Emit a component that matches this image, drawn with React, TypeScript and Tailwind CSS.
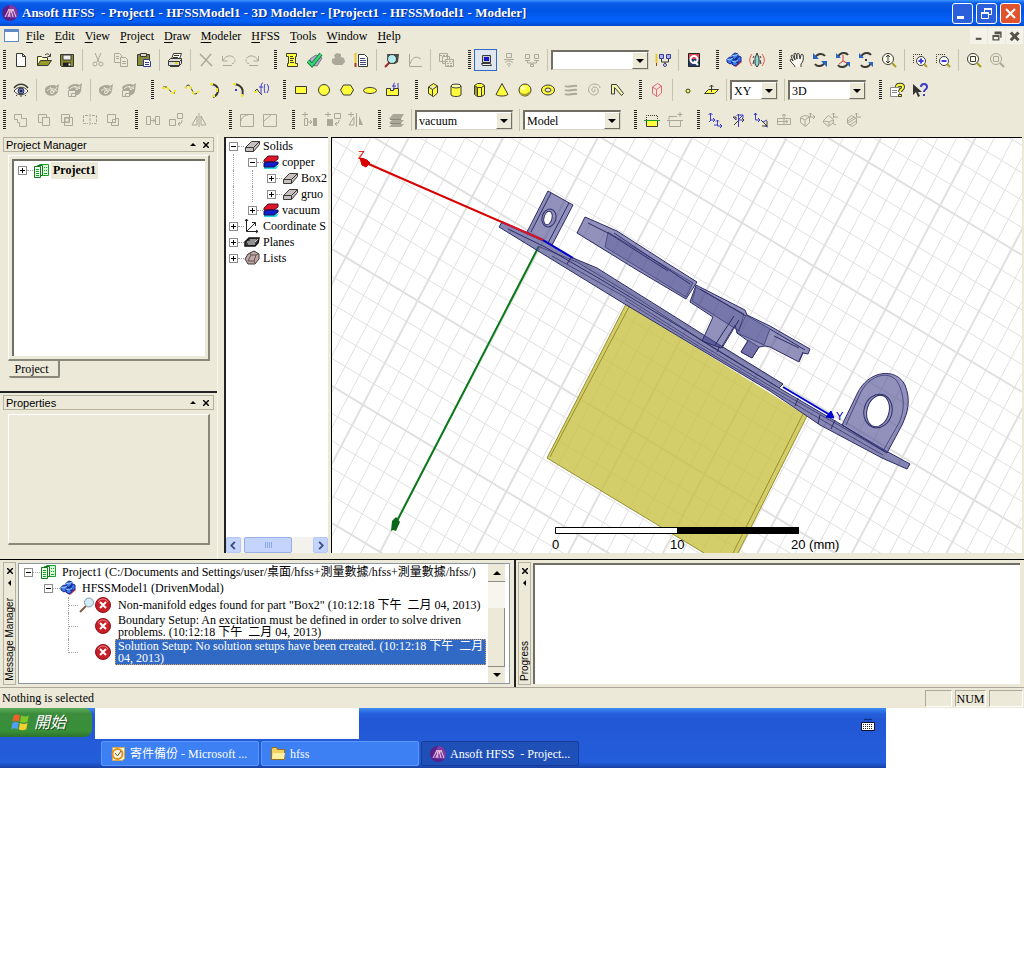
import React from "react";
import clsx from "clsx";

/* ---------- icon drawings, all on a 16 x 16 grid ---------- */

const K = "#3a3a34";
const Y = "#ffff3c";
const B = "#3c3cc8";

const icons: Record<string, React.ReactNode> = {
    new: <path d="M3.5 1.5h6l3 3v10h-9zM9.5 1.5v3h3" fill="#fff" stroke={K} />,
    open: (
        <>
            <path d="M1.5 13.5v-9h4l1 1h5v3" fill="#ffffc0" stroke={K} />
            <path d="M1.5 13.5l3-5h11l-3.500 5z" fill="#9a9a28" stroke={K} />
            <path d="M9 3c2-2 4-1 5 1M14.500 1.500v3h-3" stroke={K} />
        </>
    ),
    save: (
        <>
            <path d="M1.500 2.500h13v12h-12l-1-1z" fill="#8a8a2c" stroke={K} />
            <path d="M4 3h8v5H4z" fill="#eee" stroke={K} />
            <path d="M4 10.500h8v4H4z" fill="#222" />
            <path d="M9.500 11.500h2v2h-2z" fill="#fff" />
        </>
    ),
    cut: (
        <>
            <path d="M5 1l4 9M11 1L7 10" stroke="currentColor" />
            <circle cx="5" cy="12" r="2" stroke="currentColor" />
            <circle cx="11" cy="12" r="2" stroke="currentColor" />
        </>
    ),
    copy: (
        <>
            <path d="M1.500 1.500h5l2 2v7h-7z" stroke="currentColor" />
            <path d="M7.500 5.500h5l2 2v7h-7z" fill="#ece9d8" stroke="currentColor" />
            <path d="M3 4.500h3M3 6.500h3M9 9.500h4M9 11.500h4" stroke="currentColor" />
        </>
    ),
    paste: (
        <>
            <path d="M1.500 2.500h12v11h-12z" fill="#8a8a3c" stroke={K} />
            <path d="M4.500 1.500h6v3h-6z" fill="#ddd" stroke={K} />
            <path d="M7.500 7.500h5l2 2v5h-7z" fill="#fff" stroke="#2c3c8c" />
            <path d="M9 10.500h4M9 12.500h4" stroke="#2c3c8c" />
        </>
    ),
    print: (
        <>
            <path d="M4.500 7l2-5.500h8L12.500 7" fill="#fff" stroke={K} />
            <path d="M1.500 8.500l2-2h11v5l-2 2h-11z" fill="#ddd" stroke={K} />
            <path d="M1.500 9.500h11v4M12.500 9.500l2-2M7 3.500h5M6 5.500h5M3 14.500h9" stroke={K} />
            <path d="M8 11h3" stroke="#d8d820" strokeWidth="2" />
        </>
    ),
    delete: <path d="M2 2l12 12M13 2L3 14" stroke="currentColor" strokeWidth="1.500" />,
    undo: <path d="M1.500 4v5h5M2 8.500c3-6 10-6 12-1 0 3-1 4-3 4M2 13.500h9" stroke="currentColor" strokeDasharray="14 1 2 1" />,
    redo: <path d="M14.500 4v5h-5M14 8.500c-3-6-10-6-12-1 0 3 1 4 3 4M5 13.500h9" stroke="currentColor" strokeDasharray="14 1 2 1" />,
    scroll: (
        <>
            <path d="M2.500 1.500h10v3h-1v7h2v3h-10v-3h1v-7h-2z" fill={Y} stroke={K} />
            <path d="M6 4.500h3M6 6.500h4M6 8.500h3M6 10.500h4" stroke={K} />
        </>
    ),
    check: (
        <>
            <path d="M3 7l6-4 6 3-5 8-6-1z" fill="#b8b0d8" stroke="#777" />
            <path d="M1 9l4 4 9-11" stroke="#137a3c" strokeWidth="4" />
            <path d="M1 9l4 4 9-11" stroke="#38dc78" strokeWidth="2" />
        </>
    ),
    hand: <path d="M2 7l3-1-1-3 3-2 4 1v3l3 1 1 4-3 3H5l-3-2z" fill="currentColor" />,
    notes: (
        <>
            <path d="M5.500 2.500h6l3 3v9h-9z" fill="#fff" stroke={K} />
            <path d="M7 6.500h5M7 8.500h6M7 10.500h6M7 12.500h6" stroke="#3c4878" />
            <path d="M2.500 1v10" stroke="#e8c828" strokeWidth="2" />
            <path d="M2.500 11v4" stroke="#a03c28" strokeWidth="2" />
        </>
    ),
    lens: (
        <>
            <path d="M3 2h12l-1 8-3 2H4z" fill="#4a4a4a" />
            <circle cx="8" cy="7" r="4.500" fill="#b4ecec" stroke={K} />
            <path d="M5 11l-4 4" stroke="#a02828" strokeWidth="2" />
        </>
    ),
    curve: <path d="M2.500 2v12.500H15M3 12c3-8 6-8 11-5" stroke="currentColor" />,
    windows: (
        <>
            <path d="M1.500 1.500h8v8h-8zM4.500 4.500h7v7h-7z" stroke="currentColor" />
            <path d="M7.500 7.500h8v7h-8z" fill="#ece9d8" stroke="currentColor" />
            <path d="M2 3.500h7M8 9.500h7M9 11.500h5M9 13.500h5" stroke="currentColor" strokeDasharray="2 1" />
        </>
    ),
    local: (
        <>
            <path d="M4.500 3.500h8v7h-8z" fill="#ccc" stroke={K} />
            <path d="M6 5h5v4H6z" fill="#1414c8" />
            <path d="M3.500 11.500h9l1 2h-9z" fill="#eee" stroke={K} />
        </>
    ),
    remote: <path d="M5.500 1.500h5v4h-5zM3 7.500h10M4 10.500c3-2 5-2 8 0M6 12.500c1-1 3-1 4 0M8 13v2" stroke="currentColor" />,
    cluster: <path d="M1.500 2.500h4v4h-4zM10.500 2.500h4v4h-4zM1 8.500h5M10 8.500h5M3.500 9v2h9V9M8 11v1M6.500 12.500h3v2h-3z" stroke="currentColor" />,
    clusterEdit: (
        <>
            <path d="M1.500 2v9" stroke="#e8c828" strokeWidth="2" />
            <path d="M1.500 11v3" stroke="#a03c28" />
            <path d="M4.500 2.500h4v4h-4zM11.500 2.500h4v4h-4z" fill="#aab4ff" stroke="#3c3c8c" />
            <path d="M6.500 7v3h7V7M10 10v2" stroke={K} />
            <circle cx="10" cy="13" r="1.500" stroke="#3c3c8c" />
        </>
    ),
    queue: (
        <>
            <path d="M2.500 1.500h11v13h-11z" fill="#283c6c" stroke="#222" />
            <path d="M3 2h10v5H3z" fill="#e04858" />
            <circle cx="8" cy="7.500" r="3.500" stroke="#fff" strokeWidth="2" />
            <path d="M8 9l4 4" stroke="#fff" strokeWidth="2" />
        </>
    ),
    cubes: (
        <>
            <path d="M5 12l5 3 6-5-2-3z" fill="#d83c50" />
            <path d="M1 7l3-2 3 1v4l-3 2-3-2zM6 3l3-2 3 1v4L9 8 6 6zM6 9l3-2 3 1v4l-3 2-3-2zM10 6l3-2 2 1v4l-3 2-2-1z" fill="#3c78f0" stroke="#14288c" />
            <path d="M1 7l3 1 3-2M6 3l3 1 3-2M6 9l3 1 3-2" stroke="#9cd0ff" />
        </>
    ),
    radiate: (
        <>
            <path d="M8 1L6 6v6l2 3 2-3V6z" fill="#8cd8d8" stroke={K} />
            <path d="M5 8l-1 4M11 8l1 4M5 4l-1 2M11 4l1 2" stroke={K} />
            <path d="M3 2C0 6 0 10 3 14M13 2c3 4 3 8 0 12" stroke="#e85050" />
        </>
    ),
    pan: (
        <path
            d="M6 15c0-2-4-4-5-7 0-1 2-1 3 1L2 4c0-1 2-1 2 0l2 4-1-6c0-1 2-1 2 0l1 5V2c0-1 2-1 2 0l1 5 1-4c0-1 2-1 2 0 1 4 0 7-2 9v3"
            fill="#f8f7f0"
            stroke={K}
        />
    ),
    rotate: (
        <>
            <path d="M3 6c2-5 8-5 10-2M13 10c-2 5-8 5-10 2" stroke={K} strokeWidth="2" />
            <path d="M1 1v6h6zM15 15V9H9z" fill="#2864c8" />
        </>
    ),
    rotateAxis: (
        <>
            <path d="M3 5c2-5 8-5 10-2M13 11c-2 5-8 5-10 2" stroke={K} strokeWidth="2" />
            <path d="M1 1v5h5zM15 15v-5h-5z" fill="#2864c8" />
            <path d="M8 3v6l-4 3M8 9l4 2" stroke="#d83c3c" />
        </>
    ),
    rotateCenter: (
        <>
            <path d="M3 5c2-5 8-5 10-2M13 11c-2 5-8 5-10 2" stroke={K} strokeWidth="2" />
            <path d="M1 1v5h5zM15 15v-5h-5z" fill="#2864c8" />
            <path d="M7 7h2v2H7z" fill={K} />
        </>
    ),
    zoomDyn: (
        <>
            <circle cx="7" cy="7" r="5.500" fill="#fffff0" stroke={K} />
            <path d="M7 3v8M5 5l2-2 2 2M5 9l2 2 2-2" stroke={K} />
            <path d="M11 11l4 4" stroke="#a8a020" strokeWidth="2" />
        </>
    ),
    zoomIn: (
        <>
            <path d="M1.500 11V2.500H11" stroke={K} strokeDasharray="1 1" />
            <circle cx="9" cy="9" r="4.500" fill="#fff" stroke={K} />
            <path d="M6.500 9h5M9 6.500v5" stroke="#3c3ce0" strokeWidth="2" />
            <path d="M12 12l3 3" stroke="#a8a020" strokeWidth="2" />
        </>
    ),
    zoomOut: (
        <>
            <path d="M1.500 11V2.500H11" stroke={K} strokeDasharray="1 1" />
            <circle cx="9" cy="9" r="4.500" fill="#fff" stroke={K} />
            <path d="M6.500 9h5" stroke="#3c3ce0" strokeWidth="2" />
            <path d="M12 12l3 3" stroke="#a8a020" strokeWidth="2" />
        </>
    ),
    fit: (
        <>
            <circle cx="7" cy="7" r="5.500" fill="#fffff0" stroke={K} />
            <path d="M4.500 4.500h5v5h-5z" stroke={K} />
            <path d="M11 11l4 4" stroke="#a8a020" strokeWidth="2" />
        </>
    ),
    fitSel: (
        <>
            <circle cx="7" cy="7" r="5.500" stroke="currentColor" />
            <path d="M4.500 4.500h5v5h-5z" stroke="currentColor" />
            <path d="M11 11l4 4" stroke="currentColor" strokeWidth="2" />
        </>
    ),
    eye: (
        <>
            <path d="M1 6c4-5 10-5 14 0" stroke={K} strokeWidth="1.500" />
            <path d="M1 9c4-5 10-5 14 0-4 5-10 5-14 0z" fill="#fff" stroke={K} />
            <circle cx="8" cy="9" r="3" fill="#6c78b8" stroke="#282850" />
            <circle cx="8" cy="9" r="1" fill="#000" />
            <path d="M4 13l-1 1M8 13v2M12 13l1 1" stroke={K} />
        </>
    ),
    eyeOff: (
        <>
            <path d="M1 7c1-4 10-5 11-3l3-2-1 6c0 7-12 8-13 1z" fill="currentColor" />
            <path d="M3 9c2-3 8-3 10 0M6 5l4 5 3-5" stroke="#ece9d8" />
            <circle cx="8" cy="10" r="2" fill="#ece9d8" />
            <circle cx="8" cy="10" r="1" fill="currentColor" />
        </>
    ),
    eyeBox: (
        <>
            <path d="M1 6c1-4 10-5 11-3l3-2-1 8c-1 4-5 5-8 5z" fill="currentColor" />
            <path d="M3 7c2-3 8-3 10 0M8 4l2 4 3-4" stroke="#ece9d8" />
            <path d="M1.500 8.500h7v6h-7zM4.500 11.500h4v3h-4z" fill="#ece9d8" stroke="currentColor" />
        </>
    ),
    line: (
        <>
            <path d="M2 5h4l5 6h3" stroke={K} />
            <path d="M1 6h3M6 5l2 3M10 11h3M13 9h2" stroke="#f0e828" strokeWidth="2" />
        </>
    ),
    spline: (
        <>
            <path d="M1 6c3-5 5-3 7 2s4 5 7 1" stroke={K} />
            <path d="M1 5l2 1M6 4l1 3M8 10l2 2M13 11l2-2" stroke="#f0e828" strokeWidth="2" />
        </>
    ),
    arc: (
        <>
            <path d="M4 2c9 1 9 10 2 13" stroke={K} strokeWidth="2" />
            <path d="M3 2h3M10 6v4M5 14h3" stroke="#f0e828" strokeWidth="2" />
        </>
    ),
    arcCenter: (
        <>
            <path d="M4 2c8 1 10 6 8 12" stroke={K} strokeWidth="2" />
            <path d="M3 2h3M12 12v3" stroke="#f0e828" strokeWidth="2" />
            <path d="M5 7h2v2H5z" fill={B} />
        </>
    ),
    equation: (
        <>
            <path d="M1 10l3-3 2 3 3 3" stroke={K} />
            <path d="M1 10h3" stroke="#f0e828" strokeWidth="2" />
            <path d="M10 1c-2 0-2 2-2 11M6 5h4M12 2c-1 2-1 6 0 9M14 2c2 2 2 6 0 9" stroke={B} />
        </>
    ),
    rect: <path d="M2.500 4.500h11v7h-11z" fill={Y} stroke={K} />,
    circle: <circle cx="8" cy="8" r="5.500" fill={Y} stroke={K} />,
    hexagon: <path d="M4.500 3h7l3 5-3 5h-7l-3-5z" fill={Y} stroke={K} />,
    ellipse: <ellipse cx="8" cy="8.500" rx="6.500" ry="3" fill={Y} stroke={K} />,
    surface: (
        <>
            <path d="M1.500 6.500h4v2h3v-2h5v7h-12z" fill={Y} stroke={K} />
            <path d="M10 1c-2 0-1 3-1 7M7 4h4M13 1v5" stroke={B} />
        </>
    ),
    box: <path d="M3.500 5l5-3.500 4 2.500v7l-4 3.500-5-3zM3.500 5l4 2.500 5-3.500M7.500 7.500v7" fill={Y} stroke={K} />,
    cylinder: (
        <>
            <path d="M3 4v9c2 2 8 2 10 0V4" fill={Y} stroke={K} />
            <ellipse cx="8" cy="4" rx="5" ry="2" fill="#ffffb0" stroke={K} />
        </>
    ),
    prism: (
        <>
            <path d="M3.500 3.500l3-2h4l3 2v9l-3 2h-4l-3-2z" fill={Y} stroke={K} />
            <path d="M4 4l3 1v9l-3-2z" fill="#9a9a28" />
            <path d="M3.500 3.500l3 2h4l3-2M6.500 5.500v9M10.500 5.500v9" stroke={K} />
        </>
    ),
    cone: <path d="M8 1.500l6 11c-3 2-9 2-12 0z" fill={Y} stroke={K} />,
    sphere: (
        <>
            <circle cx="8" cy="8" r="6" fill={Y} stroke={K} />
            <path d="M3 11c3 3 8 2 10-1" stroke="#a8a028" strokeWidth="2" />
            <circle cx="6" cy="6" r="2" fill="#ffffd0" />
        </>
    ),
    torus: (
        <>
            <ellipse cx="8" cy="8" rx="6.500" ry="5" fill={Y} stroke={K} />
            <ellipse cx="8" cy="8" rx="3" ry="2" fill="#ece9d8" stroke={K} />
        </>
    ),
    helix: <path d="M2 4c3 2 8-1 12 0M2 8c3 2 8-1 12 0M2 12c3 2 8-1 12 0" stroke="currentColor" strokeWidth="2" />,
    spiral: <path d="M8 8c1-1 2 1 0 2-3 0-3-5 1-5 5 1 4 8-1 8-8-1-7-11 1-11 3 0 5 2 5 4" stroke="currentColor" />,
    bond: <path d="M2.500 12V2.500h5l7 9-2 2-7-8v6.500z" fill="#f4f4b0" stroke={K} />,
    region: <path d="M3.500 5l5-3.500 4 2.500v7l-4 3.500-5-3zM3.500 5l4 2.500 5-3.500M7.500 7.500v7" stroke="#e06878" />,
    point: <circle cx="8" cy="9" r="2" fill={Y} stroke={K} />,
    plane: (
        <>
            <path d="M1.500 11.500l4-4h10l-4 4z" fill={Y} stroke={K} />
            <path d="M8.500 10V3M6.500 5l2-2 2 2" stroke={K} />
        </>
    ),
    helpDoc: (
        <>
            <path d="M1.500 5.500h9v9h-9z" fill="#fff" stroke="#888" />
            <path d="M3 8.500h5M3 10.500h5" stroke="#888" />
            <path d="M8 5c0-3 6-3 6 0 0 3-3 2-3 5" stroke={K} strokeWidth="4" />
            <path d="M8 5c0-3 6-3 6 0 0 3-3 2-3 5" stroke={Y} strokeWidth="2" />
            <path d="M9.500 12.500h3v2h-3z" fill={Y} stroke={K} />
        </>
    ),
    helpArrow: (
        <>
            <path d="M1 2v11l3-3 2 5 2-1-2-4h4z" fill="#333" />
            <path d="M9 5c0-4 6-4 6 0 0 3-3 2-3 5M12 12v2" stroke={B} strokeWidth="2" />
        </>
    ),
    unite: <path d="M1.500 2.500h7v4h5v8h-7v-4h-2v-3h-3z" stroke="currentColor" />,
    subtract: <path d="M2.500 2.500h8v3h-4v5h-4zM6.500 5.500h7v8h-7z" stroke="currentColor" />,
    intersect: <path d="M2.500 2.500h8v8h-8zM5.500 5.500h8v8h-8zM6 6h4v4H6z" stroke="currentColor" />,
    split: <path d="M6 3.500H1.500v8H6M10 3.500h4.500v8H10M8 2v11" stroke="currentColor" strokeDasharray="3 1" />,
    imprint: <path d="M2.500 2.500h8v8h-8zM10.500 6.500h3v7h-7v-3M7.500 7.500h3v3h-3z" stroke="currentColor" />,
    move: <path d="M1.500 4.500h4v8h-4zM10.500 4.500h4v8h-4zM6 8.500h4M8 6.500l2 2-2 2" stroke="currentColor" />,
    turn: <path d="M1.500 7.500h6v6h-6zM9.500 1.500h5v5h-5zM14 8c0 3-1 4-4 4M12 10l-2 2 2 2" stroke="currentColor" />,
    mirror: <path d="M6 4v9H1zM10 4v9h5zM8 1v14" stroke="currentColor" />,
    fillet: <path d="M1.500 2.500h13v12h-13zM2 9c1-4 4-6 7-6" stroke="currentColor" />,
    chamfer: <path d="M1.500 2.500h13v12h-13zM2 9l7-6" stroke="currentColor" />,
    dupLine: (
        <>
            <path d="M3 0v5M0 2.500h6M2.500 6.500h3v7h-3zM6 10h4M8 8l2 2-2 2" stroke="currentColor" />
            <path d="M11 6h4v8h-4z" fill="currentColor" />
        </>
    ),
    dupAxis: (
        <>
            <path d="M3 0v5M0 2.500h6M9.500 1.500h6v5h-6zM14 8c0 3-1 4-4 4M12 10l-2 2 2 2" stroke="currentColor" />
            <path d="M2 7h6v7H2z" fill="currentColor" />
        </>
    ),
    dupMirror: (
        <>
            <path d="M3 0v5M0 2.500h6M6 5v8H1zM8.500 1v14" stroke="currentColor" />
            <path d="M11 4v9h4z" fill="currentColor" />
        </>
    ),
    layers: (
        <>
            <path d="M1 7l4-5h11l-3 5zM1 11l3-3h12l-3 3zM1 15l3-3h12l-3 3z" fill="currentColor" />
            <path d="M2 7.500h11M2 11.500h11" stroke="#8c897a" />
        </>
    ),
    section: (
        <>
            <path d="M2.500 8V3.500h11V8" stroke={K} strokeDasharray="1 1" />
            <path d="M2.500 8.500h11v6h-11z" fill={Y} stroke={K} />
            <path d="M0 8.500h16" stroke="#18a028" />
        </>
    ),
    sectionOff: <path d="M2 7.500V4.500h8M2.500 8.500h11v6h-11zM0 8.500h16M13 0v5M10.500 2.500h5" stroke="currentColor" />,
    cs1: (
        <>
            <path d="M3.500 1v7H8M1.500 3l2-2 2 2M6 6l2 2-2 2" stroke={B} />
            <path d="M10.500 8v6H15M9 9.500L10.500 8 12 9.500M13 12l2 2-2 2M7 13h3M4 8l-2 2" stroke={B} />
        </>
    ),
    cs2: (
        <>
            <path d="M8.500 15V2M6.500 4l2-2 2 2M8 8l5-5M10 3h3v3M3 5l3 3M8 8h6" stroke={B} />
            <path d="M3 5h3v3M12 6l2 2-2 2M8 9l-4 4" stroke={K} />
        </>
    ),
    cs3: (
        <>
            <path d="M2.500 1v7H7M1 3l1.500-2L4 3M5 6l2 2-2 2M10 10l4-2M12 14l3 1" stroke={B} />
            <path d="M8 8l6 6M14 9v5H9" stroke={K} />
        </>
    ),
    cs4: <path d="M1.500 6.500h13v6h-13zM8 12V2M6 4l2-2 2 2M2 9.500h10M10 8l2 1.500L10 11" stroke="currentColor" />,
    cs5: <path d="M1.500 5.500l4-2 5 1v6l-4 4-5-4zM2 6l4 2 4-3M6 8v6M11.500 5V1M10 2.500L11.500 1 13 2.500M11 5h5M14 3l2 2-2 2" stroke="currentColor" />,
    cs6: <path d="M1.500 8.500l5-5 5 4v3l-5 4-5-4zM2 9l5 1 4-2M7 10v4M11.500 6V1M10 2.500L11.500 1 13 2.500M11 5h5M10 11l4 2" stroke="currentColor" />,
    cs7: <path d="M2.500 6.500l4-3 5 3v5l-4 3-5-3zM3 11l8-5M3 9l6-4M5 13l6-4M11.500 5V1M10 2.500L11.500 1 13 2.500M11 5h5" stroke="currentColor" />,

    /* tree and message icons */
    project: (
        <>
            <path d="M6.500 1.500h9v11h-9z" fill="#d8ffd8" stroke="#18a028" />
            <path d="M4.500 2.500h5v10h-5z" fill="#fff" stroke="#147820" />
            <path d="M1.500 3.500h6v11h-6z" fill="#e8ffe8" stroke="#147820" />
            <path d="M3 6.500h3M3 8.500h3M3 10.500h3M3 12.500h3M11 4.500h1M13 4.500h1M11 7.500h1M13 7.500h1M11 10.500h3" stroke="#18a028" />
        </>
    ),
    solid: (
        <>
            <path d="M1.500 9.500l6-6h8v3l-6 7h-8z" fill="#c8c0c0" stroke={K} />
            <path d="M1.500 9.500h8v4M9.500 9.500l6-6" stroke={K} />
        </>
    ),
    material: (
        <>
            <path d="M1 12h13l2-1-3 4H1z" fill="#28d8e8" />
            <path d="M1 6l4-4h10v3l-4 3H1z" fill="#e01428" stroke="#501018" />
            <path d="M1 9l4-1h10v2l-4 3H1z" fill="#1420d0" stroke="#101050" />
        </>
    ),
    coord: <path d="M2.500 1v12.500H14M1 3l1.500-2L4 3M12 12l2 1.500-2 1.500M3 13l8-8M8 4.500h3.500V8" stroke="#222" />,
    planes: (
        <>
            <path d="M1 8l4-4h10l-1 5-3 3H1z" fill="#444" stroke="#111" strokeWidth="1.500" />
            <path d="M3 8h8l3-3M4 10h7M6 6h6" stroke="#ddd" />
        </>
    ),
    lists: (
        <>
            <path d="M1 9l3-5 6-3 5 3v5l-4 5H4z" fill="#c0a8a8" stroke={K} />
            <path d="M4 11l3-6h5l-2 6zM7 5l-1-2M12 5l2-1M10 11l1 2" stroke="#605050" />
        </>
    ),
    error: (
        <>
            <circle cx="8" cy="8" r="7.500" fill="#c81e28" stroke="#8c1018" />
            <path d="M3 5c2-4 8-4 10 0" stroke="#f08890" />
            <path d="M5 5l6 6M11 5l-6 6" stroke="#fff" strokeWidth="2" />
        </>
    ),
    magnifier: (
        <>
            <path d="M7 9l-6 6" stroke="#8a5840" strokeWidth="2" />
            <circle cx="10" cy="5.500" r="4.500" fill="#d0ecf8" stroke="#8898a8" />
        </>
    ),
    ansoft: (
        <>
            <circle cx="8" cy="8" r="8" fill="#58208c" />
            <path d="M8 0a8 8 0 0 1 6 13L3 12z" fill="#7c3ca8" />
            <path d="M3 12L7 4l1 8M6 12l3-8 2 8M9 8l2-4 3 8" stroke="#f4c8d8" />
        </>
    ),
    outlook: (
        <>
            <path d="M2.500 1.500h12v11l-2 2h-10z" fill="#fff4d0" stroke="#d8a850" />
            <circle cx="7.500" cy="8" r="5" fill="#fffbe8" stroke="#e0901c" strokeWidth="2" />
            <path d="M5 7l2.500 3L11 5" stroke="#705020" />
        </>
    ),
    folder: (
        <>
            <path d="M1.500 3.500l1-2h4l1 2h7v10h-13z" fill="#f0d060" stroke="#987018" />
            <path d="M3 7h12l-1 6H2z" fill="#fff0a0" />
        </>
    ),
    keyboard: (
        <>
            <path d="M4 3l2-1 2 1 2-1 2 1" stroke="#0c2060" />
            <path d="M1.500 5.500h13v8h-13z" fill="#fff" stroke="#101028" />
            <path d="M3 7.500h10M3 9.500h10M3 11.500h10" stroke="#222" strokeDasharray="1 1" />
        </>
    ),
    flag: (
        <>
            <path d="M3 2c2-1 3-1 5 0L7 7C5 6 4 6 2 7z" fill="#f06028" />
            <path d="M9 2c2 1 4 1 6 0l-1 5c-2 1-4 1-6 0z" fill="#80c828" />
            <path d="M2 8c2-1 3-1 5 0l-1 5c-2-1-3-1-5 0z" fill="#50a0f8" />
            <path d="M8 8c2 1 4 1 6 0l-1 5c-2 1-4 1-6 0z" fill="#f8d030" />
        </>
    ),
};

function Icon({ name, className = "size-4" }: { name: string; className?: string }) {
    return (
        <svg viewBox="0 0 16 16" fill="none" aria-hidden="true" className={clsx("shrink-0", className)}>
            {icons[name]}
        </svg>
    );
}

/* ---------- toolbar parts ---------- */

function Tool({ name, off, active }: { name: string; off?: boolean; active?: boolean }) {
    return (
        <button
            type="button"
            aria-label={name}
            disabled={off}
            className={clsx(
                "flex h-[22px] w-[23px] shrink-0 items-center justify-center text-[#aca899]",
                active && "border border-[#316ac5] bg-[#e0e6f0]",
            )}
        >
            <Icon name={name} />
        </button>
    );
}

/* a leading "-" marks a disabled tool */
function Tools({ names }: { names: string }) {
    return names
        .split(" ")
        .map((n) => (n[0] === "-" ? <Tool key={n} name={n.slice(1)} off /> : <Tool key={n} name={n} />));
}

function Grip({ className }: { className?: string }) {
    return (
        <div className={clsx("flex w-[17px] shrink-0 justify-end pr-[3px] first:w-[9px]", className)}>
            <div className="h-5 w-[3px] bg-[repeating-linear-gradient(#222_0_1px,#ece9d8_1px_2px)]" />
        </div>
    );
}

function Sep() {
    return (
        <div className="flex w-2 shrink-0 justify-center">
            <div className="h-[22px] w-px bg-[#c5c2b0]" />
        </div>
    );
}

function Combo({ label, value, className }: { label: string; value: string; className: string }) {
    return (
        <div className={clsx("relative mr-0.5 shrink-0", className)}>
            <select
                aria-label={label}
                className="block h-5 w-full appearance-none rounded-none border border-t-2 border-l-2 border-[#d6d3c2] border-t-[#716f64] border-l-[#716f64] bg-white pl-[2px] text-[12px] leading-4 text-black outline-none"
            >
                <option>{value}</option>
            </select>
            <span className="pointer-events-none absolute top-[2px] right-[1px] flex h-[17px] w-4 items-center justify-center border border-[#716f64] border-t-white border-l-white bg-[#ece9d8]">
                <svg viewBox="0 0 8 4" className="h-1 w-2">
                    <path d="M0 0h8L4 4z" />
                </svg>
            </span>
        </div>
    );
}

const menus = ["File", "Edit", "View", "Project", "Draw", "Modeler", "HFSS", "Tools", "Window", "Help"];

function TitleBar() {
    return (
        <header className="flex h-[26px] items-center bg-[linear-gradient(#3c96ff_0%,#0a5ce8_12%,#0054e3_40%,#0462fc_80%,#0048c8_100%)] pr-[3px] pl-[2px] text-white">
            <Icon name="ansoft" />
            <h1 className="ml-1 flex-1 overflow-hidden text-[13px] font-bold whitespace-pre [text-shadow:1px_1px_#0a2c8c]">
                Ansoft HFSS{"  "}- Project1 - HFSSModel1 - 3D Modeler - [Project1 - HFSSModel1 - Modeler]
            </h1>
            <div className="flex gap-[3px]">
                <button type="button" aria-label="Minimize" className="size-[21px] rounded-[3px] border border-white bg-[#2c5fdc]">
                    <svg viewBox="0 0 19 19">
                        <path d="M4 12h7v3H4z" fill="#fff" />
                    </svg>
                </button>
                <button type="button" aria-label="Restore" className="size-[21px] rounded-[3px] border border-white bg-[#2c5fdc]">
                    <svg viewBox="0 0 19 19" fill="none" stroke="#fff">
                        <path d="M7.500 8V4.500h7v6H12M4.500 8.500h7v6h-7z" />
                        <path d="M7 5h8M4 9h8" strokeWidth="2" />
                    </svg>
                </button>
                <button type="button" aria-label="Close" className="size-[21px] rounded-[3px] border border-white bg-[#e0532c]">
                    <svg viewBox="0 0 19 19" stroke="#fff" strokeWidth="2">
                        <path d="M5 5l9 9M14 5l-9 9" />
                    </svg>
                </button>
            </div>
        </header>
    );
}

function MenuBar() {
    return (
        <nav className="flex h-[19px] items-center pl-1 text-[12px]">
            <div className="h-[13px] w-[15px] border border-t-[3px] border-[#5c8cc8] bg-white" />
            <div className="ml-[7px] flex flex-1 gap-[10px]">
                {menus.map((m) => (
                    <button key={m} type="button">
                        <u className="underline-offset-2">{m[0]}</u>
                        {m.slice(1)}
                    </button>
                ))}
            </div>
            <div className="flex gap-px pr-px text-[#55534a]">
                {["M4 11h8v3H4z", "M5 2h10v9h-2V6H5zM2 7h10v8H2zM4 10v3h6v-3z", "M4 2l4 4 4-4 3 3-4 4 4 4-3 3-4-4-4 4-3-3 4-4-4-4z"].map((d, i) => (
                    <button
                        key={d}
                        type="button"
                        aria-label={["Minimize document", "Restore document", "Close document"][i]}
                        className="flex h-4 w-[17px] items-center justify-center bg-[#f4f3ea]"
                    >
                        <svg viewBox="0 0 17 17" fill="currentColor" fillRule="evenodd" className="size-3">
                            <path d={d} />
                        </svg>
                    </button>
                ))}
            </div>
        </nav>
    );
}

function Toolbars() {
    const row = "flex h-[30px] items-center overflow-hidden";
    return (
        <div>
            <div className={row}>
                <Grip />
                <Tools names="new open save" />
                <Sep />
                <Tools names="-cut -copy paste" />
                <Sep />
                <Tools names="print" />
                <Sep />
                <Tools names="-delete -undo -redo" />
                <Grip />
                <Tools names="scroll check -hand notes" />
                <Sep />
                <Tools names="lens -curve" />
                <Sep />
                <Tools names="-windows" />
                <Grip />
                <Tool name="local" active />
                <Tools names="-remote -cluster" />
                <Sep />
                <Combo label="Machine" value="" className="w-[98px]" />
                <Tools names="clusterEdit" />
                <Sep />
                <Tools names="queue" />
                <Grip />
                <Tools names="cubes radiate" />
                <Grip />
                <Tools names="pan rotate rotateAxis rotateCenter zoomDyn" />
                <Sep />
                <Tools names="zoomIn zoomOut" />
                <Sep />
                <Tools names="fit -fitSel" />
            </div>
            <div className={row}>
                <Grip />
                <Tools names="eye" />
                <Sep />
                <Tools names="-eyeOff -eyeBox" />
                <Sep />
                <Tools names="-eyeOff -eyeBox" />
                <Grip />
                <Tools names="line spline arc arcCenter equation" />
                <Grip />
                <Tools names="rect circle hexagon ellipse surface" />
                <Grip />
                <Tools names="box cylinder prism cone sphere torus -helix -spiral bond" />
                <Grip />
                <Tools names="region" />
                <Sep />
                <Tools names="point plane" />
                <Sep />
                <Combo label="Drawing plane" value="XY" className="w-12" />
                <Sep />
                <Combo label="Movement mode" value="3D" className="w-[78px]" />
                <Grip />
                <Tools names="helpDoc helpArrow" />
            </div>
            <div className={row}>
                <Grip />
                <Tools names="-unite -subtract -intersect -split -imprint" />
                <Grip />
                <Tools names="-move -turn -mirror" />
                <Grip className="ml-2" />
                <Tools names="-fillet -chamfer" />
                <Grip />
                <Tools names="-dupLine -dupAxis -dupMirror" />
                <Grip />
                <Tools names="-layers" />
                <Sep />
                <Combo label="Material" value="vacuum" className="w-[98px]" />
                <Sep />
                <Combo label="Model type" value="Model" className="w-[98px]" />
                <Grip />
                <Tools names="section -sectionOff" />
                <Grip />
                <Tools names="cs1 cs2 cs3 -cs4 -cs5 -cs6 -cs7" />
            </div>
        </div>
    );
}

/* ---------- docked panels ---------- */

function PanelHeader({ title }: { title: string }) {
    return (
        <div className="mr-[3px] ml-[3px] flex h-[15px] items-center border border-[#b5b29f] pr-1 pl-[2px] font-['Liberation_Sans',sans-serif] text-[11px] leading-3">
            <h2 className="flex-1">{title}</h2>
            <button type="button" aria-label={`Collapse ${title}`} className="mr-[7px]">
                <svg viewBox="0 0 6 3" className="h-[3px] w-[6px]">
                    <path d="M0 3h6L3 0z" />
                </svg>
            </button>
            <CloseButton label={title} />
        </div>
    );
}

function CloseButton({ label }: { label: string }) {
    return (
        <button type="button" aria-label={`Close ${label}`}>
            <svg viewBox="0 0 6 6" stroke="#000" strokeWidth="1.500" className="size-[6px]">
                <path d="M0 0l6 6M6 0L0 6" />
            </svg>
        </button>
    );
}

function Expander({ open }: { open?: boolean }) {
    return (
        <button type="button" aria-label={open ? "Collapse" : "Expand"} className="size-[9px] shrink-0 border border-[#8c8c8c] bg-white">
            <svg viewBox="0 0 7 7" stroke="#000" className="size-[7px]">
                <path d={open ? "M1 3.500h5" : "M1 3.500h5M3.500 1v5"} />
            </svg>
        </button>
    );
}

const Dots = ({ className }: { className: string }) => (
    <span className={clsx("shrink-0 border-t border-dotted border-[#a0a0a0]", className)} />
);

const tree = [
    { label: "Solids", icon: "solid", level: 0, open: true },
    { label: "copper", icon: "material", level: 1, open: true },
    { label: "Box2", icon: "solid", level: 2 },
    { label: "gruo", icon: "solid", level: 2 },
    { label: "vacuum", icon: "material", level: 1 },
    { label: "Coordinate S", icon: "coord", level: 0 },
    { label: "Planes", icon: "planes", level: 0 },
    { label: "Lists", icon: "lists", level: 0 },
];

function ModelTree() {
    return (
        <section className="mt-[2px] mb-[6px] ml-[6px] flex w-[104px] shrink-0 flex-col border-t border-l-2 border-[#222] bg-white">
            <ul className="flex-1">
                {tree.map((n) => (
                    <li key={n.label} className="flex h-4 items-center pl-[3px] text-[12px] whitespace-nowrap">
                        {Array.from({ length: n.level }, (_, i) => (
                            <span key={i} className="ml-1 h-4 w-[15px] shrink-0 border-l border-dotted border-[#a0a0a0]" />
                        ))}
                        <Expander open={n.open} />
                        <Dots className="w-[6px]" />
                        <Icon name={n.icon} />
                        <span className="pl-[3px]">{n.label}</span>
                    </li>
                ))}
            </ul>
            <div className="flex h-4 justify-between bg-[#f3f2ec]">
                <ScrollButton label="Scroll left" d="M6 1L2 5l4 4" />
                <div className="mr-auto ml-[3px] flex w-12 items-center justify-center gap-px rounded-[2px] border border-[#98b0e8] bg-[#c4d4fc]">
                    {[0, 1, 2, 3].map((i) => (
                        <span key={i} className="h-[6px] w-px bg-[#8ca8e8]" />
                    ))}
                </div>
                <ScrollButton label="Scroll right" d="M3 1l4 4-4 4" />
            </div>
        </section>
    );
}

function ScrollButton({ label, d }: { label: string; d: string }) {
    return (
        <button type="button" aria-label={label} className="flex w-[15px] items-center justify-center rounded-[2px] border border-[#b4c8f8] bg-[#c4d4fc]">
            <svg viewBox="0 0 9 10" fill="none" stroke="#3c5080" strokeWidth="2" className="size-[9px]">
                <path d={d} />
            </svg>
        </button>
    );
}

function LeftPanels() {
    return (
        <aside className="w-[218px] shrink-0 border-r border-[#f8f7f0]">
            <section className="border-b-2 border-[#222] pt-[2px] pb-[13px]">
                <PanelHeader title="Project Manager" />
                <div className="mt-[3px] mr-[7px] ml-2 h-[206px] border border-r-2 border-b-2 border-white border-r-[#8a887a] border-b-[#8a887a] p-[3px]">
                    <div className="h-full border-t-2 border-l-2 border-[#716f64] bg-white pt-[1px] pl-1">
                        <div className="flex h-[17px] items-center text-[12px] font-bold">
                            <Expander />
                            <Dots className="w-[6px]" />
                            <Icon name="project" />
                            <span className="ml-[2px] bg-[#ece9d8] px-[2px] leading-[17px]">Project1</span>
                        </div>
                    </div>
                </div>
                <button
                    type="button"
                    className="ml-[9px] block h-[17px] w-[51px] rounded-b-[2px] border-r-2 border-b-2 border-[#8a887a] pr-1 text-[12px] leading-4"
                >
                    Project
                </button>
            </section>
            <section className="pt-[2px]">
                <PanelHeader title="Properties" />
                <div className="mt-[4px] mr-[7px] ml-2 h-[131px] border border-r-2 border-b-2 border-white border-r-[#8a887a] border-b-[#8a887a]" />
            </section>
        </aside>
    );
}

/* ---------- 3D view ---------- */

const steep = Array.from({ length: 56 }, (_, i) => ({ x: 314 + i * 18.9, major: i % 5 === 0 }));
const flat = Array.from({ length: 36 }, (_, i) => ({ y: -436 + i * 27.4, major: i % 5 === 0 }));

function Viewport() {
    return (
        <section className="mt-[2px] mr-[2px] mb-[6px] ml-[3px] min-w-0 flex-1 border-t border-l border-black bg-white">
            <svg
                viewBox="332 138 690 415"
                preserveAspectRatio="xMinYMin slice"
                role="img"
                aria-label="3D model"
                className="h-[415px] w-full"
                fill="none"
            >
                <g stroke="#e0e0e0">
                    {steep.map((l) => (
                        <path key={l.x} d={`M${l.x} 138l-218 415`} strokeWidth={l.major ? 2 : 1} />
                    ))}
                    {flat.map((l) => (
                        <path key={l.y} d={`M332 ${l.y}l690 417`} strokeWidth={l.major ? 2 : 1} />
                    ))}
                </g>

                {/* dielectric box */}
                <path d="M626 304L807 416L738 553H704L547 458z" fill="#c8c040" fillOpacity=".78" />
                <path d="M626 304L547 458L704 553M807 416L738 553M630 305L550 457M803 414L733 553" stroke="#96902c" />

                {/* axes under the part */}
                <path d="M364 162L543 240" stroke="#d80000" strokeWidth="2" />
                <path d="M539 246L396 523" stroke="#087818" strokeWidth="2" />

                {/* bottom rail */}
                <g stroke="#2c2c68" strokeWidth="1">
                    <path
                        d="M502 222L543 241L573 258L597 268L680 320L718 344L783 384L779 388L842 425L888 452L910 464L907 469L882 458L820 425L770 391L693 345L623 303L499 227z"
                        fill="#48488c"
                        fillOpacity=".66"
                    />
                    <path d="M508 229L545 247L600 279L680 327L720 352L779 388" />
                    <path d="M540 247L577 262L640 300L700 339L776 386M552 256L625 297L695 341L770 386L842 427L885 452M625 300L700 347L800 407L822 420L883 455" strokeOpacity=".7" />
                    <path d="M720 345l-3 7M798 398l-3 8M820 415l-2 9M835 420l-4 9M571 257l-4 7" />
                </g>

                {/* parts that stand on the rail */}
                <g stroke="#2c2c68" fill="#484890" fillOpacity=".6">
                    <path d="M548 191L573 205L552 245L527 232z" />
                    <path d="M569 203L548 243M551 193L531 232" fill="none" />
                    <ellipse cx="549" cy="218" rx="7" ry="9" transform="rotate(15 549 218)" fill="none" />
                    <ellipse cx="548" cy="218" rx="4" ry="7" transform="rotate(15 548 218)" fill="#fff" fillOpacity="1" />
                    <path d="M585 217L617 231L670 265L697 282L686 299L637 270L577 233z" />
                    <path d="M608 232L693 283L686 297L605 247z" fillOpacity=".35" strokeOpacity=".6" />
                    <path d="M588 223L610 234L668 271M614 233L690 284" fill="none" />
                    <path d="M696 285L745 310L747 315L770 326L810 349L808 354L803 353L799 362L770 347L765 346L759 347L752 358L741 352L748 341L737 333L735 325L721 348L702 341L713 317L690 302z" />
                    <path d="M696 287L744 314L739 331L692 301zM746 315L770 329L764 345L737 333z" fillOpacity=".35" strokeOpacity=".6" />
                    <path d="M748 340L759 347L752 358L741 352z" fillOpacity=".4" strokeOpacity=".6" />
                    <path d="M700 289L746 316M739 320L722 348M734 316L715 345M770 329L805 350M774 336L799 348M803 352l-4 9" fill="none" />
                </g>

                {/* mounting lug */}
                <path
                    d="M842 425L857 394C868 370 896 367 905 385C911 400 908 412 902 425L887 453z"
                    fill="#484890"
                    fillOpacity=".6"
                    stroke="#2c2c68"
                />
                <path d="M846 425L860 394C869 375 888 370 897 381C905 395 905 410 899 423L883 451" stroke="#2c2c68" strokeOpacity=".7" />
                <ellipse cx="878" cy="411" rx="14" ry="17" transform="rotate(15 878 411)" stroke="#2c2c68" />
                <ellipse cx="878" cy="411" rx="11" ry="16" transform="rotate(15 878 411)" fill="#fff" stroke="#2c2c68" />

                {/* axis heads */}
                <path d="M502 222L543 240" stroke="#d8142c" strokeWidth="2" />
                <path d="M543 240L573 258M783 387L830 415" stroke="#0000d0" strokeWidth="2" />
                <path d="M360 158l7 2 3 3-4 4-4-2z" fill="#d80000" stroke="#d80000" />
                <path d="M396 517l4 5-4 9-3-1-2 1 1-10z" fill="#086818" />
                <path d="M834 418l-8-1 5-6z" fill="#0000d0" stroke="#0000d0" />
                <g className="font-['Liberation_Sans',sans-serif] text-[11px]">
                    <text x="358" y="159" className="fill-[#d80000]">Z</text>
                    <text x="836" y="420" className="fill-[#0000a8]">Y</text>
                </g>

                {/* scale */}
                <path d="M555.500 527.500h122v6h-122z" fill="#fff" stroke="#000" />
                <path d="M677 527h122v7H677z" fill="#000" />
                <g className="fill-black font-['Liberation_Sans',sans-serif] text-[13px]">
                    <text x="552" y="549">0</text>
                    <text x="670" y="549">10</text>
                    <text x="791" y="549">20 (mm)</text>
                </g>
            </svg>
        </section>
    );
}

/* ---------- messages and progress ---------- */

function SideCaption({ title }: { title: string }) {
    return (
        <div className="my-[2px] flex w-[13px] shrink-0 flex-col items-center border border-[#b5b29f] pt-[5px] pb-[3px]">
            <CloseButton label={title} />
            <button type="button" aria-label={`Collapse ${title}`} className="mt-[6px]">
                <svg viewBox="0 0 3 6" className="h-[6px] w-[3px]">
                    <path d="M3 0v6L0 3z" />
                </svg>
            </button>
            <h2 className="mt-auto rotate-180 font-['Liberation_Sans',sans-serif] text-[10px] leading-3 [writing-mode:vertical-rl]">{title}</h2>
        </div>
    );
}

const messages = [
    { text: 'Non-manifold edges found for part "Box2" (10:12:18 下午  二月 04, 2013)', zoom: true },
    { text: "Boundary Setup: An excitation must be defined in order to solve driven\nproblems. (10:12:18 下午  二月 04, 2013)" },
    { text: "Solution Setup: No solution setups have been created. (10:12:18 下午  二月\n04, 2013)", selected: true },
];

function MessageManager() {
    return (
        <section className="flex w-[516px] shrink-0 border-r-2 border-[#222] pr-1 pl-[3px]">
            <SideCaption title="Message Manager" />
            <div className="my-[3px] ml-[2px] flex min-w-0 flex-1 border border-[#8c98a0] bg-white">
                <div className="min-w-0 flex-1 pl-[5px] text-[12px]">
                    <div className="flex h-4 items-center whitespace-nowrap">
                        <Expander open />
                        <Dots className="w-[7px]" />
                        <Icon name="project" />
                        <span className="pl-[6px]">Project1 (C:/Documents and Settings/user/桌面/hfss+測量數據/hfss+測量數據/hfss/)</span>
                    </div>
                    <div className="flex h-4 items-center pl-5">
                        <Expander open />
                        <Dots className="w-[7px]" />
                        <Icon name="cubes" />
                        <span className="pl-[6px]">HFSSModel1 (DrivenModal)</span>
                    </div>
                    <ul className="pt-px">
                        {messages.map((m) => (
                            <li key={m.text} className="flex items-center pl-11">
                                <span className={clsx("w-px self-stretch border-l border-dotted border-[#a0a0a0]", m.selected && "mb-3")} />
                                <Dots className="w-[9px]" />
                                <span className="w-[17px] shrink-0 pl-px">{m.zoom && <Icon name="magnifier" />}</span>
                                <Icon name="error" />
                                <span
                                    className={clsx(
                                        "ml-1 border border-dotted px-[2px] leading-3 whitespace-pre",
                                        m.selected ? "border-[#d8a060] bg-[#316ac5] text-white" : "border-transparent",
                                    )}
                                >
                                    {m.text}
                                </span>
                            </li>
                        ))}
                    </ul>
                </div>
                <div className="mr-1 flex w-[17px] flex-col bg-[#f6f5ee]">
                    <button type="button" aria-label="Scroll up" className="flex h-[18px] items-center justify-center border-b border-[#8c8c80] bg-[#ece9d8]">
                        <svg viewBox="0 0 8 4" className="h-1 w-2">
                            <path d="M0 4h8L4 0z" />
                        </svg>
                    </button>
                    <div className="mt-[26px] flex-1 border-r border-b border-[#8c8c80] bg-[#ece9d8]" />
                    <button type="button" aria-label="Scroll down" className="flex h-4 items-center justify-center bg-[#ece9d8]">
                        <svg viewBox="0 0 8 4" className="h-1 w-2">
                            <path d="M0 0h8L4 4z" />
                        </svg>
                    </button>
                </div>
            </div>
        </section>
    );
}

function StatusBar() {
    return (
        <footer className="flex h-[21px] items-center border-t border-[#aca899] pr-px pl-[2px] text-[12px]">
            <span className="flex-1">Nothing is selected</span>
            <div className="flex h-[17px] gap-[3px] text-center leading-4">
                <span className="w-[27px] border border-[#aca899] border-r-white border-b-white" />
                <span className="w-[31px] border border-[#aca899] border-r-white border-b-white">NUM</span>
                <span className="w-[34px] border border-[#aca899] border-r-white border-b-white" />
            </div>
        </footer>
    );
}

const tasks = [
    { icon: "outlook", label: "寄件備份 - Microsoft ..." },
    { icon: "folder", label: "hfss" },
    { icon: "ansoft", label: "Ansoft HFSS  - Project...", active: true },
];

function Taskbar() {
    return (
        <nav className="h-[60px] w-[86.500%] bg-[linear-gradient(#3f8cf3_0,#245edb_10%,#2257d5_20%,#245edb_90%,#1941a5_100%)] text-[12px] text-white">
            <div className="flex h-[31px]">
                <button
                    type="button"
                    className="flex h-[29px] w-[92px] items-center gap-1 rounded-r-[8px] bg-[linear-gradient(#5cac5c,#3c8c3c_20%,#389038_80%,#2c702c)] pl-[10px] text-[16px] italic [text-shadow:1px_1px_#1c4c1c]"
                >
                    <Icon name="flag" className="size-5" />
                    開始
                </button>
                <div className="ml-[3px] w-[264px] bg-white" />
                <span className="mt-[9px] mr-[10px] ml-auto">
                    <Icon name="keyboard" />
                </span>
            </div>
            <div className="mt-[2px] flex gap-[2px] pl-[101px]">
                {tasks.map((t) => (
                    <button
                        key={t.label}
                        type="button"
                        className={clsx(
                            "flex h-[25px] w-[158px] items-center gap-1 rounded-[2px] border pl-2 whitespace-pre",
                            t.active ? "border-[#163c98] bg-[#1e50b8]" : "border-[#5c98fc] bg-[#3c80f4]",
                        )}
                    >
                        <Icon name={t.icon} />
                        {t.label}
                    </button>
                ))}
            </div>
        </nav>
    );
}

export default function App() {
    return (
        <div className="min-h-screen bg-white font-['Liberation_Serif','Noto_Sans_CJK_TC',serif] text-black">
            <div className="bg-[#ece9d8]">
                <TitleBar />
                <MenuBar />
                <Toolbars />
                <main>
                    <div className="flex border-b border-black">
                        <LeftPanels />
                        <ModelTree />
                        <Viewport />
                    </div>
                    <div className="flex h-[127px]">
                        <MessageManager />
                        <section className="flex min-w-0 flex-1 pr-1 pl-[2px]">
                            <SideCaption title="Progress" />
                            <div className="my-[3px] ml-[2px] flex-1 border-t-2 border-l-2 border-[#716f64] bg-white" />
                        </section>
                    </div>
                </main>
                <StatusBar />
            </div>
            <Taskbar />
        </div>
    );
}
